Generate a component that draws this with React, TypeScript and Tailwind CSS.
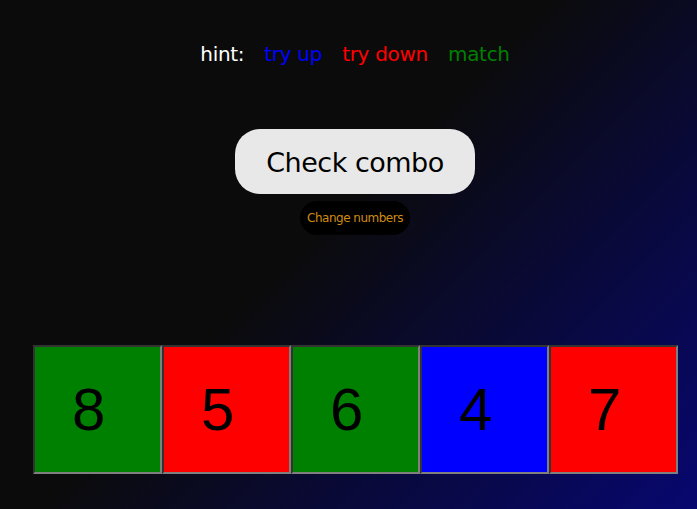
import React from "react";

const boxes = [
  { n: 8, c: "bg-[#008000]" },
  { n: 5, c: "bg-[#ff0000]" },
  { n: 6, c: "bg-[#008000]" },
  { n: 4, c: "bg-[#0000ff]" },
  { n: 7, c: "bg-[#ff0000]" },
];

export default function App() {
  return (
    <div className="w-[697px] h-[509px] overflow-hidden bg-[linear-gradient(135deg,#0b0b0b_45%,#070770_100%)] font-['DejaVu_Sans',sans-serif]">
      <div className="flex flex-col items-center pl-[13px]">
        <div className="mt-[40px] h-[28px] flex items-center gap-[20px] text-[20px] tracking-[-0.3px]">
          <span className="text-white">hint:</span>
          <span className="text-[#0000ff]">try up</span>
          <span className="text-[#ff0000]">try down</span>
          <span className="text-[#008000]">match</span>
        </div>
        <button className="mt-[61px] w-[240px] h-[65px] rounded-[25px] bg-[#e8e8e8] text-black text-[27px] tracking-[-0.5px] flex items-center justify-center pt-[4px]">
          Check combo
        </button>
        <button className="mt-[7px] w-[110px] h-[34px] rounded-[17px] bg-black text-[#d08c10] text-[12px] tracking-[-0.5px] flex items-center justify-center">
          Change numbers
        </button>
      </div>
      <div className="mt-[110px] flex ml-[33px]">
        {boxes.map((b, i) => (
          <div
            key={i}
            className={`w-[129px] h-[129px] border-2 border-t-[#333333] border-l-[#333333] border-b-[#7f7f7f] border-r-[#7f7f7f] ${b.c} flex items-center pl-[37px] font-['Liberation_Sans',sans-serif] text-[60px] text-black leading-none`}
          >
            {b.n}
          </div>
        ))}
      </div>
    </div>
  );
}
